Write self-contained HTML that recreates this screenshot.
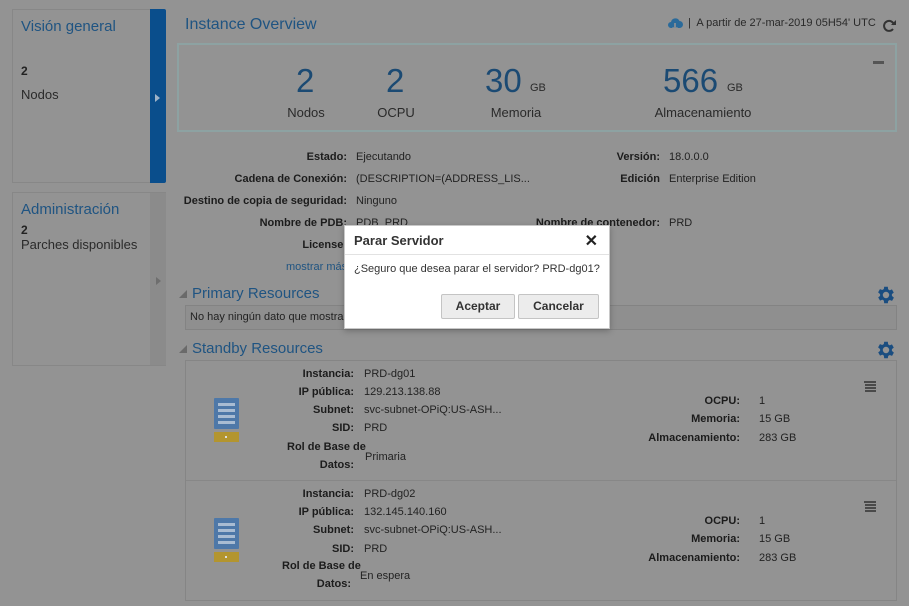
<!DOCTYPE html>
<html><head><meta charset="utf-8"><style>
*{margin:0;padding:0;box-sizing:border-box}
body{width:909px;height:606px;overflow:hidden;background:#939393;font-family:"Liberation Sans",sans-serif;color:#222;position:relative;font-size:11px}
.a{position:absolute;white-space:nowrap}
.h{color:#1f5482}
.lb{font-weight:bold;color:#1c1c1c;text-align:right}
.num{color:#1b4a73;font-size:33px}
.u{font-size:11px;color:#2a2a2a}
.lbl{font-size:13px;color:#2a2a2a;text-align:center}
</style></head><body>
<div class="a" style="left:12px;top:9px;width:139px;height:174px;border:1px solid #878787"></div>
<div class="a" style="left:150px;top:9px;width:16px;height:174px;background:#0a4e8c;border-radius:0 2px 2px 0"></div>
<div class="a" style="left:155px;top:94px;width:0;height:0;border-left:5px solid #9fb3c8;border-top:4px solid transparent;border-bottom:4px solid transparent"></div>
<div class="a h" style="left:21px;top:18px;font-size:15px">Visión general</div>
<div class="a" style="left:21px;top:64px;font-weight:bold;font-size:12px">2</div>
<div class="a" style="left:21px;top:87px;font-size:13px;color:#2a2a2a">Nodos</div>

<div class="a" style="left:12px;top:192px;width:154px;height:174px;border:1px solid #878787"></div>
<div class="a" style="left:150px;top:193px;width:16px;height:172px;background:#8b8b8b"></div>
<div class="a" style="left:156px;top:277px;width:0;height:0;border-left:5px solid #6e6e6e;border-top:4px solid transparent;border-bottom:4px solid transparent"></div>
<div class="a h" style="left:21px;top:201px;font-size:15px">Administración</div>
<div class="a" style="left:21px;top:223px;font-weight:bold;font-size:12px">2</div>
<div class="a" style="left:21px;top:237px;font-size:13px;color:#2a2a2a">Parches disponibles</div>

<div class="a h" style="left:185px;top:16px;font-size:16px">Instance Overview</div>
<svg class="a" style="left:667px;top:17px" width="16" height="14" viewBox="0 0 16 14"><path d="M4 11a3 3 0 0 1 0-6 4.5 4.5 0 0 1 8.5-1A3 3 0 0 1 12.5 11z" fill="#2a6a9a"/><path d="M8 6v7M5.5 10.5 8 13l2.5-2.5" stroke="#939393" stroke-width="1.6" fill="none"/></svg>
<div class="a" style="left:688px;top:17px;font-size:11px;color:#2a2a2a">|&nbsp; A partir de 27-mar-2019 05H54' UTC</div>
<svg class="a" style="left:882px;top:19px" width="15" height="14" viewBox="0 0 15 14"><path d="M12 6A5 5 0 1 0 11 10" stroke="#333" stroke-width="2" fill="none"/><path d="M9 6h5V1z" fill="#333"/></svg>
<div class="a" style="left:177px;top:43px;width:720px;height:89px;border:2px solid #8da2a2"></div>
<div class="a" style="left:873px;top:61px;width:11px;height:3px;background:#555"></div>
<div class="a num" style="left:296px;top:62px">2</div>
<div class="a num" style="left:386px;top:62px">2</div>
<div class="a num" style="left:485px;top:62px">30</div><div class="a u" style="left:530px;top:82px">GB</div>
<div class="a num" style="left:663px;top:62px">566</div><div class="a u" style="left:727px;top:82px">GB</div>
<div class="a lbl" style="left:276px;top:105px;width:60px">Nodos</div>
<div class="a lbl" style="left:366px;top:105px;width:60px">OCPU</div>
<div class="a lbl" style="left:476px;top:105px;width:80px">Memoria</div>
<div class="a lbl" style="left:643px;top:105px;width:120px">Almacenamiento</div>

<div class="a lb" style="left:170px;top:151px;width:177px">Estado:</div><div class="a" style="left:356px;top:151px">Ejecutando</div>
<div class="a lb" style="left:170px;top:173px;width:177px">Cadena de Conexión:</div><div class="a" style="left:356px;top:173px">(DESCRIPTION=(ADDRESS_LIS...</div>
<div class="a lb" style="left:170px;top:195px;width:177px">Destino de copia de seguridad:</div><div class="a" style="left:356px;top:195px">Ninguno</div>
<div class="a lb" style="left:170px;top:217px;width:177px">Nombre de PDB:</div><div class="a" style="left:356px;top:217px">PDB_PRD</div>
<div class="a lb" style="left:170px;top:239px;width:177px">License:</div>
<div class="a" style="left:286px;top:261px;color:#1f5482">mostrar más</div>
<div class="a lb" style="left:500px;top:151px;width:160px">Versión:</div><div class="a" style="left:669px;top:151px">18.0.0.0</div>
<div class="a lb" style="left:500px;top:173px;width:160px">Edición</div><div class="a" style="left:669px;top:173px">Enterprise Edition</div>
<div class="a lb" style="left:480px;top:217px;width:180px">Nombre de contenedor:</div><div class="a" style="left:669px;top:217px">PRD</div>

<div class="a" style="left:179px;top:290px;width:0;height:0;border-bottom:8px solid #6a6a6a;border-left:8px solid transparent"></div>
<div class="a h" style="left:192px;top:285px;font-size:15px">Primary Resources</div>
<svg class="a" style="left:875px;top:284px" width="22" height="22" viewBox="0 0 24 24"><path fill="#1a4d80" d="M19.4 13a7.8 7.8 0 0 0 0-2l2.1-1.6-2-3.5-2.5 1a7.3 7.3 0 0 0-1.7-1L15 3h-4l-.4 2.6a7.3 7.3 0 0 0-1.7 1l-2.5-1-2 3.5L6.6 11a7.8 7.8 0 0 0 0 2l-2.1 1.6 2 3.5 2.5-1a7.3 7.3 0 0 0 1.7 1L11 21h4l.4-2.6a7.3 7.3 0 0 0 1.7-1l2.5 1 2-3.5zM13 15.5a3.5 3.5 0 1 1 0-7 3.5 3.5 0 0 1 0 7z" transform="translate(-1 0)"/></svg>
<div class="a" style="left:185px;top:305px;width:712px;height:25px;border:1px solid #838383;background:#8f8f8f"></div>
<div class="a" style="left:190px;top:311px">No hay ningún dato que mostrar</div>

<div class="a" style="left:179px;top:345px;width:0;height:0;border-bottom:8px solid #6a6a6a;border-left:8px solid transparent"></div>
<div class="a h" style="left:192px;top:340px;font-size:15px">Standby Resources</div>
<svg class="a" style="left:875px;top:339px" width="22" height="22" viewBox="0 0 24 24"><path fill="#1a4d80" d="M19.4 13a7.8 7.8 0 0 0 0-2l2.1-1.6-2-3.5-2.5 1a7.3 7.3 0 0 0-1.7-1L15 3h-4l-.4 2.6a7.3 7.3 0 0 0-1.7 1l-2.5-1-2 3.5L6.6 11a7.8 7.8 0 0 0 0 2l-2.1 1.6 2 3.5 2.5-1a7.3 7.3 0 0 0 1.7 1L11 21h4l.4-2.6a7.3 7.3 0 0 0 1.7-1l2.5 1 2-3.5zM13 15.5a3.5 3.5 0 1 1 0-7 3.5 3.5 0 0 1 0 7z" transform="translate(-1 0)"/></svg>
<div class="a" style="left:185px;top:360px;width:712px;height:241px;border:1px solid #858585"></div>
<div class="a" style="left:186px;top:480px;width:710px;height:1px;background:#878787"></div>

<svg class="a" style="left:214px;top:398px" width="25" height="45" viewBox="0 0 25 45"><rect x="0" y="0" width="25" height="31" rx="1" fill="#4e78a8"/><g fill="#a9bcd2"><rect x="4" y="5" width="17" height="3"/><rect x="4" y="11" width="17" height="3"/><rect x="4" y="17" width="17" height="3"/><rect x="4" y="23" width="17" height="3"/></g><rect x="0" y="34" width="25" height="10" fill="#b3952f"/><rect x="11" y="38" width="2" height="2" fill="#ddd"/></svg>
<div class="a lb" style="left:270px;top:368px;width:84px">Instancia:</div><div class="a" style="left:364px;top:368px">PRD-dg01</div>
<div class="a lb" style="left:270px;top:386px;width:84px">IP pública:</div><div class="a" style="left:364px;top:386px">129.213.138.88</div>
<div class="a lb" style="left:270px;top:404px;width:84px">Subnet:</div><div class="a" style="left:364px;top:404px">svc-subnet-OPiQ:US-ASH...</div>
<div class="a lb" style="left:270px;top:422px;width:84px">SID:</div><div class="a" style="left:364px;top:422px">PRD</div>
<div class="a lb" style="left:287px;top:441px">Rol de Base de</div>
<div class="a lb" style="left:270px;top:459px;width:84px">Datos:</div><div class="a" style="left:365px;top:451px">Primaria</div>
<div class="a lb" style="left:600px;top:395px;width:140px">OCPU:</div><div class="a" style="left:759px;top:395px">1</div>
<div class="a lb" style="left:600px;top:413px;width:140px">Memoria:</div><div class="a" style="left:759px;top:413px">15 GB</div>
<div class="a lb" style="left:600px;top:432px;width:140px">Almacenamiento:</div><div class="a" style="left:759px;top:432px">283 GB</div>
<svg class="a" style="left:864px;top:381px" width="12" height="11"><g fill="#4a4a4a"><rect y="0" width="12" height="2"/><rect x="1" y="3" width="11" height="2"/><rect x="1" y="6" width="11" height="2"/><rect x="1" y="9" width="11" height="2"/></g></svg>

<svg class="a" style="left:214px;top:518px" width="25" height="45" viewBox="0 0 25 45"><rect x="0" y="0" width="25" height="31" rx="1" fill="#4e78a8"/><g fill="#a9bcd2"><rect x="4" y="5" width="17" height="3"/><rect x="4" y="11" width="17" height="3"/><rect x="4" y="17" width="17" height="3"/><rect x="4" y="23" width="17" height="3"/></g><rect x="0" y="34" width="25" height="10" fill="#b3952f"/><rect x="11" y="38" width="2" height="2" fill="#ddd"/></svg>
<div class="a lb" style="left:270px;top:488px;width:84px">Instancia:</div><div class="a" style="left:364px;top:488px">PRD-dg02</div>
<div class="a lb" style="left:270px;top:506px;width:84px">IP pública:</div><div class="a" style="left:364px;top:506px">132.145.140.160</div>
<div class="a lb" style="left:270px;top:524px;width:84px">Subnet:</div><div class="a" style="left:364px;top:524px">svc-subnet-OPiQ:US-ASH...</div>
<div class="a lb" style="left:270px;top:543px;width:84px">SID:</div><div class="a" style="left:364px;top:543px">PRD</div>
<div class="a lb" style="left:282px;top:560px">Rol de Base de</div>
<div class="a lb" style="left:270px;top:578px;width:81px">Datos:</div><div class="a" style="left:360px;top:570px">En espera</div>
<div class="a lb" style="left:600px;top:515px;width:140px">OCPU:</div><div class="a" style="left:759px;top:515px">1</div>
<div class="a lb" style="left:600px;top:533px;width:140px">Memoria:</div><div class="a" style="left:759px;top:533px">15 GB</div>
<div class="a lb" style="left:600px;top:552px;width:140px">Almacenamiento:</div><div class="a" style="left:759px;top:552px">283 GB</div>
<svg class="a" style="left:864px;top:501px" width="12" height="11"><g fill="#4a4a4a"><rect y="0" width="12" height="2"/><rect x="1" y="3" width="11" height="2"/><rect x="1" y="6" width="11" height="2"/><rect x="1" y="9" width="11" height="2"/></g></svg>

<div class="a" style="left:344px;top:225px;width:266px;height:104px;background:#fff;border:1px solid #c8c8c8;box-shadow:0 2px 6px rgba(0,0,0,.25)">
  <div style="height:29px;border-bottom:1px solid #e2e2e2;padding:7px 0 0 9px;font-weight:bold;font-size:13px;color:#333">Parar Servidor<span style="position:absolute;right:11px;top:5px;font-size:16px;color:#222">✕</span></div>
  <div style="padding:8px 0 0 9px;font-size:11px;color:#333">¿Seguro que desea parar el servidor? PRD-dg01?</div>
  <div style="position:absolute;left:96px;top:68px;width:74px;height:25px;border:1px solid #c4c4c4;border-radius:2px;background:#ececec;font-weight:bold;font-size:12px;color:#333;text-align:center;line-height:23px">Aceptar</div>
  <div style="position:absolute;left:173px;top:68px;width:81px;height:25px;border:1px solid #c4c4c4;border-radius:2px;background:#ececec;font-weight:bold;font-size:12px;color:#333;text-align:center;line-height:23px">Cancelar</div>
</div>
</body></html>
